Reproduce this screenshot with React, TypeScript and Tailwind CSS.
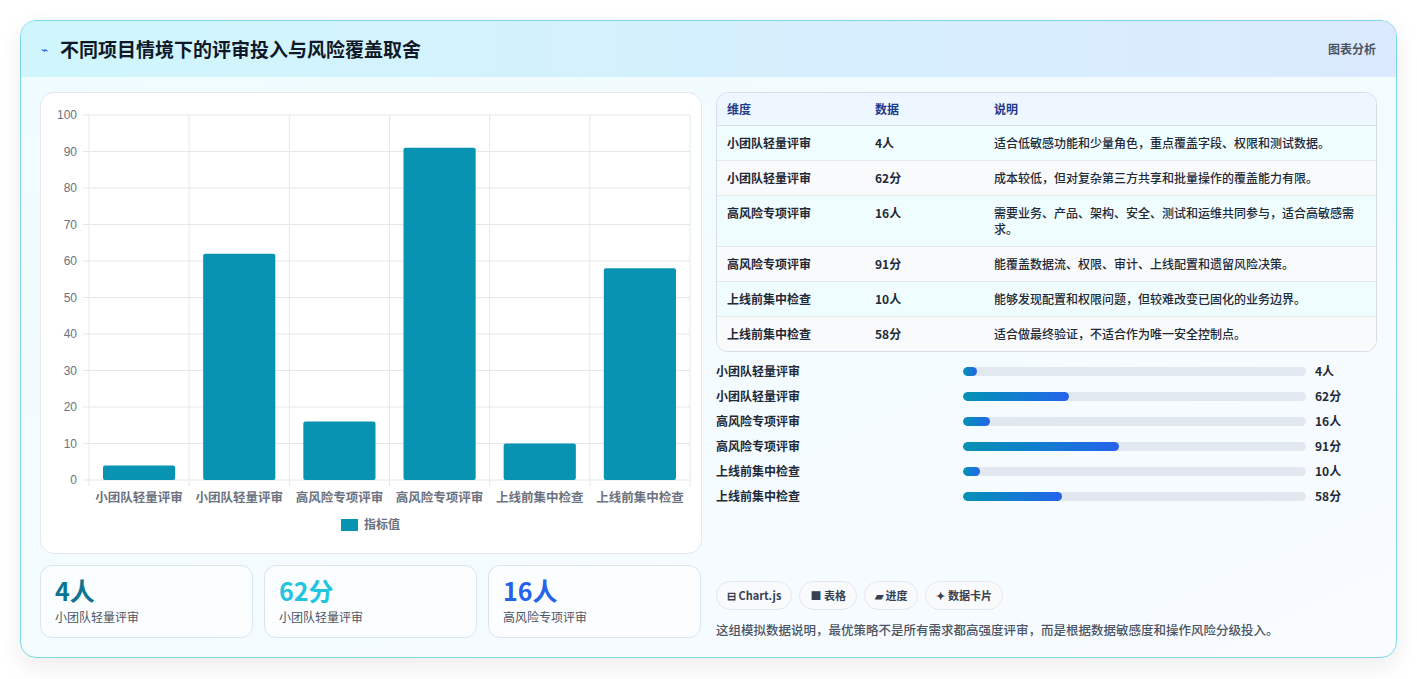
import React from "react";

const F = { fontFamily: '"Noto Sans CJK SC", "Noto Sans", sans-serif' };
const cats = ["小团队轻量评审","小团队轻量评审","高风险专项评审","高风险专项评审","上线前集中检查","上线前集中检查"];
const vals = [4,62,16,91,10,58];
const units = ["4人","62分","16人","91分","10人","58分"];
const rows = [
  ["小团队轻量评审","4人","适合低敏感功能和少量角色，重点覆盖字段、权限和测试数据。"],
  ["小团队轻量评审","62分","成本较低，但对复杂第三方共享和批量操作的覆盖能力有限。"],
  ["高风险专项评审","16人","需要业务、产品、架构、安全、测试和运维共同参与，适合高敏感需求。"],
  ["高风险专项评审","91分","能覆盖数据流、权限、审计、上线配置和遗留风险决策。"],
  ["上线前集中检查","10人","能够发现配置和权限问题，但较难改变已固化的业务边界。"],
  ["上线前集中检查","58分","适合做最终验证，不适合作为唯一安全控制点。"],
];

function Chart() {
  const x0 = 48, x1 = 649, y0 = 22, y1 = 387;
  const h = y1 - y0;
  const cw = (x1 - x0) / 6;
  return (
    <svg width="660" height="460" viewBox="0 0 660 460">
      {Array.from({ length: 11 }).map((_, i) => {
        const y = y1 - (h * i) / 10;
        return (
          <g key={i}>
            <line x1={x0 - 6} x2={x1} y1={y} y2={y} stroke="#e5e7eb" />
            <text x={x0 - 12} y={y + 4} textAnchor="end" fontSize="12" fill="#6b7280" fontFamily="Liberation Sans, sans-serif">{i * 10}</text>
          </g>
        );
      })}
      {Array.from({ length: 7 }).map((_, i) => (
        <line key={i} x1={x0 + cw * i} x2={x0 + cw * i} y1={y0} y2={y1 + 6} stroke="#e5e7eb" />
      ))}
      {vals.map((v, i) => {
        const bh = (h * v) / 100;
        return <rect key={i} x={x0 + cw * i + 14} y={y1 - bh} width={cw - 28} height={bh} rx="2" fill="#0893b3" />;
      })}
      {cats.map((c, i) => (
        <text key={i} x={x0 + cw * i + cw / 2} y={y1 + 22} textAnchor="middle" fontSize="12.5" fontWeight="600" fill="#6b7280" style={F}>{c}</text>
      ))}
      <rect x="300" y="426" width="17" height="12" fill="#0893b3" />
      <text x="323" y="436" fontSize="12" fontWeight="600" fill="#6b7280" style={F}>指标值</text>
    </svg>
  );
}

export default function App() {
  return (
    <div className="w-[1417px] h-[679px] bg-white pt-[20px] pl-[20px]" style={F}>
      <div className="w-[1377px] h-[638px] rounded-[16px] border border-[#7dd8e8] overflow-hidden bg-gradient-to-br from-[#effcff] to-[#f8fbff] shadow-[0_8px_24px_rgba(0,0,0,0.08)]">
        <div className="h-[56px] flex items-center justify-between px-[20px] bg-gradient-to-r from-[#cff6fd] to-[#dbeafe]">
          <div className="flex items-center gap-[12px]">
            <span className="text-[#2563eb] text-[12px]">⌁</span>
            <span className="text-[19px] font-bold text-[#111827]">不同项目情境下的评审投入与风险覆盖取舍</span>
          </div>
          <span className="text-[12px] font-semibold text-[#4b5563]">图表分析</span>
        </div>
        <div className="flex gap-[14px] px-[19px] pt-[15px]">
          <div className="w-[662px] flex flex-col gap-[11px]">
            <div className="h-[462px] rounded-[14px] border border-[#e5e7eb] bg-white overflow-hidden">
              <Chart />
            </div>
            <div className="flex gap-[11px]">
              {[["4人","text-[#0e7490]"],["62分","text-[#22c5dd]"],["16人","text-[#2563eb]"]].map(([v, c], i) => (
                <div key={i} className="w-[213px] h-[73px] rounded-[12px] border border-[#dbe4ef] bg-white/60 px-[14px] pt-[9px]">
                  <div className={`text-[25px] font-bold leading-[31px] ${c}`}>{v}</div>
                  <div className="text-[12px] text-[#4b5563] mt-[2px]">{cats[i]}</div>
                </div>
              ))}
            </div>
          </div>
          <div className="w-[662px] flex flex-col">
            <div className="rounded-[12px] border border-[#d5dde8] overflow-hidden text-[12px] text-[#1f2937]">
              <div className="flex h-[33px] items-center bg-[#eef6ff] border-b border-[#d5dde8] text-[#1e3a8a] font-semibold">
                <div className="w-[158px] pl-[10px]">维度</div>
                <div className="w-[119px]">数据</div>
                <div className="flex-1">说明</div>
              </div>
              {rows.map((r, i) => (
                <div key={i} className={`flex py-[9px] leading-[16px] ${i < 5 ? "border-b border-[#e5e7eb]" : ""} ${i % 2 ? "bg-[#f8fafc]" : "bg-[#f0fdff]"}`}>
                  <div className="w-[158px] pl-[10px] font-semibold">{r[0]}</div>
                  <div className="w-[119px] font-semibold">{r[1]}</div>
                  <div className="flex-1 pr-[20px] font-medium">{r[2]}</div>
                </div>
              ))}
            </div>
            <div className="mt-[10px] flex flex-col gap-[7px]">
              {vals.map((v, i) => (
                <div key={i} className="flex items-center h-[18px] text-[12px] font-semibold text-[#1f2937]">
                  <div className="w-[247px]">{cats[i]}</div>
                  <div className="w-[343px] h-[9px] rounded-full bg-[#e2e8f0] overflow-hidden">
                    <div className="h-full rounded-full bg-gradient-to-r from-[#0891b2] to-[#2563eb]" style={{ width: `${v / 2}%`, minWidth: 14 }} />
                  </div>
                  <div className="ml-[9px]">{units[i]}</div>
                </div>
              ))}
            </div>
            <div className="mt-[76px] flex gap-[7px]">
              {["⊟ Chart.js","■ 表格","▰ 进度","✦ 数据卡片"].map((t) => (
                <span key={t} className="h-[29px] px-[10px] rounded-full border border-[#e5e7eb] bg-[#f8fafc] flex items-center text-[11px] font-semibold text-[#374151]">{t}</span>
              ))}
            </div>
            <div className="mt-[11px] text-[12.5px] font-medium text-[#4b5563]">这组模拟数据说明，最优策略不是所有需求都高强度评审，而是根据数据敏感度和操作风险分级投入。</div>
          </div>
        </div>
      </div>
    </div>
  );
}
